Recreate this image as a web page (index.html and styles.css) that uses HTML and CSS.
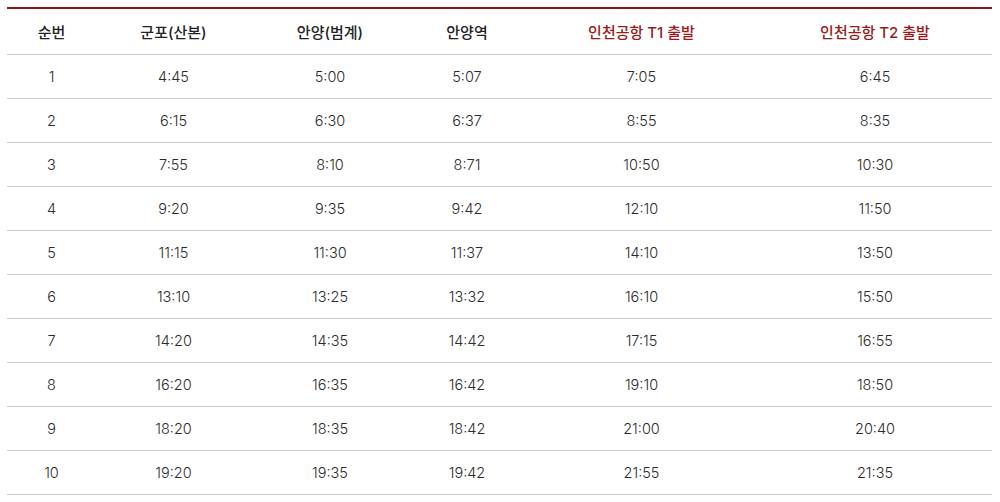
FILE: index.html
```html
<!DOCTYPE html>
<html lang="ko">
<head>
<meta charset="utf-8">
<link rel="stylesheet" href="styles.css">
</head>
<body>
<table class="timetable">
  <colgroup>
    <col class="c1"><col class="c2"><col class="c3"><col class="c4"><col class="c5"><col class="c6">
  </colgroup>
  <thead>
    <tr>
      <th>순번</th>
      <th>군포(산본)</th>
      <th>안양(범계)</th>
      <th>안양역</th>
      <th class="red">인천공항 T1 출발</th>
      <th class="red">인천공항 T2 출발</th>
    </tr>
  </thead>
  <tbody>
    <tr><td>1</td><td>4:45</td><td>5:00</td><td>5:07</td><td>7:05</td><td>6:45</td></tr>
    <tr><td>2</td><td>6:15</td><td>6:30</td><td>6:37</td><td>8:55</td><td>8:35</td></tr>
    <tr><td>3</td><td>7:55</td><td>8:10</td><td>8:71</td><td>10:50</td><td>10:30</td></tr>
    <tr><td>4</td><td>9:20</td><td>9:35</td><td>9:42</td><td>12:10</td><td>11:50</td></tr>
    <tr><td>5</td><td>11:15</td><td>11:30</td><td>11:37</td><td>14:10</td><td>13:50</td></tr>
    <tr><td>6</td><td>13:10</td><td>13:25</td><td>13:32</td><td>16:10</td><td>15:50</td></tr>
    <tr><td>7</td><td>14:20</td><td>14:35</td><td>14:42</td><td>17:15</td><td>16:55</td></tr>
    <tr><td>8</td><td>16:20</td><td>16:35</td><td>16:42</td><td>19:10</td><td>18:50</td></tr>
    <tr><td>9</td><td>18:20</td><td>18:35</td><td>18:42</td><td>21:00</td><td>20:40</td></tr>
    <tr><td>10</td><td>19:20</td><td>19:35</td><td>19:42</td><td>21:55</td><td>21:35</td></tr>
  </tbody>
</table>
</body>
</html>
```

FILE: styles.css
```css
html, body {
  margin: 0;
  padding: 0;
  background: #fff;
}
body {
  padding: 7px 8px 0 7px;
  font-family: Inter, "Noto Sans CJK KR", sans-serif;
}
.timetable {
  width: 985px;
  border-collapse: collapse;
  table-layout: fixed;
  border-top: 2px solid #8e1414;
}
.c1 { width: 89px; }
.c2 { width: 155px; }
.c3 { width: 158px; }
.c4 { width: 116px; }
.c5 { width: 233px; }
.c6 { width: 234px; }
.timetable th,
.timetable td {
  text-align: center;
  padding: 0;
  border-bottom: 1px solid #c8c8c8;
}
.timetable th {
  height: 45px;
  font-size: 15px;
  font-weight: 500;
  color: #222;
}
.timetable th.red {
  color: #9a1a1a;
}
.timetable td {
  height: 43px;
  font-size: 14.5px;
  font-weight: 300;
  color: #2a2a2a;
}
```
